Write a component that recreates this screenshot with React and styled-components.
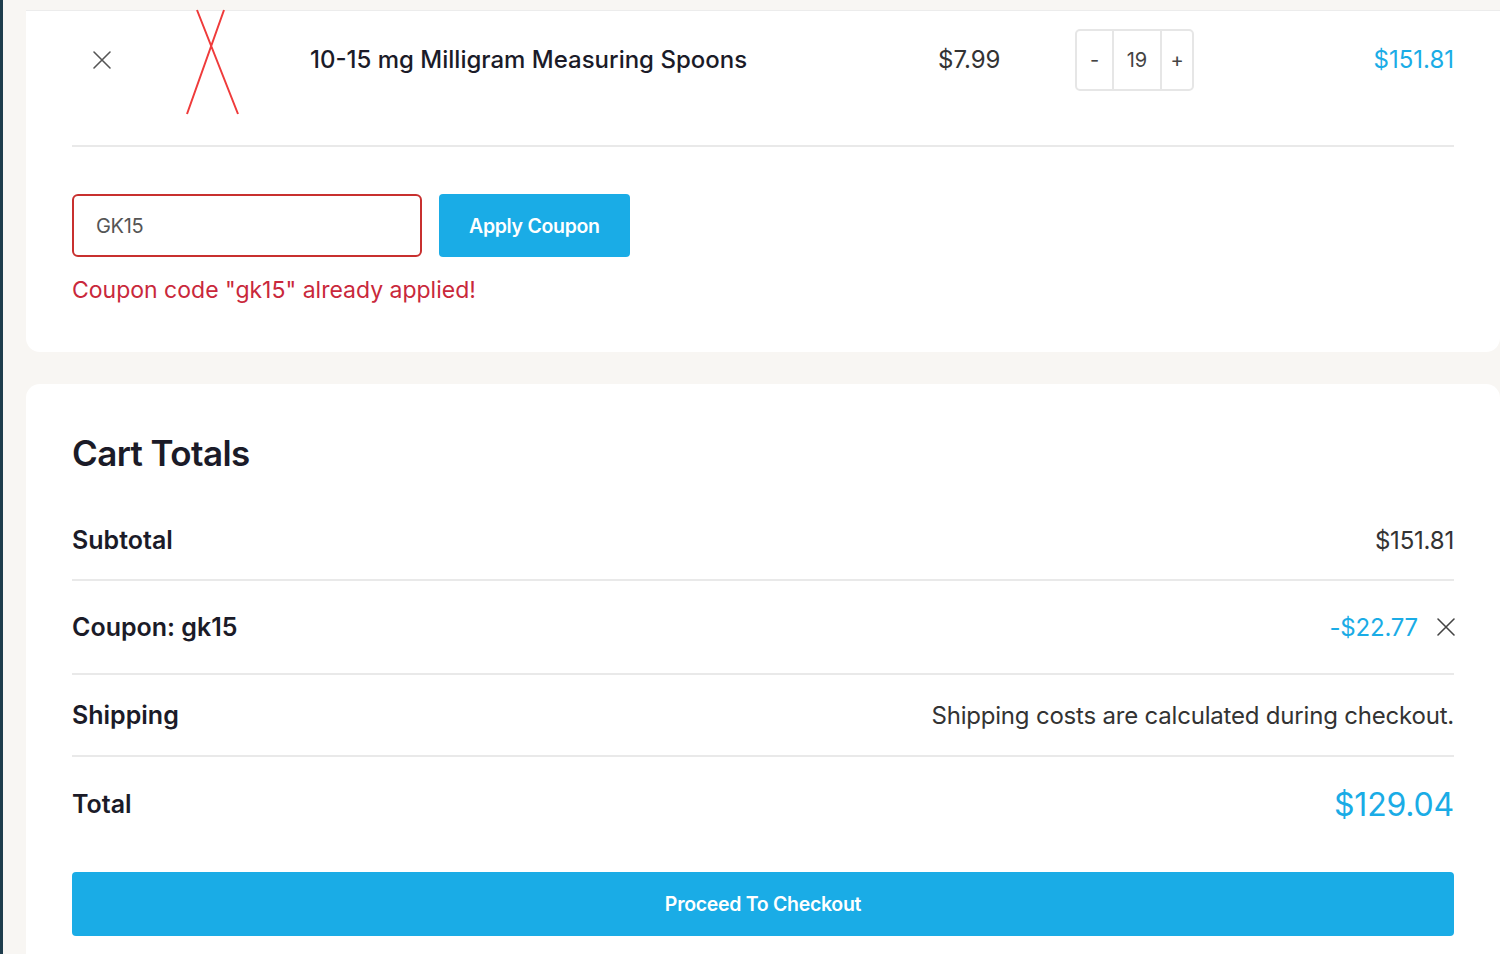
import styled, { createGlobalStyle } from 'styled-components';

const GlobalStyle = createGlobalStyle`
  * { box-sizing: border-box; }
  html, body {
    margin: 0;
    padding: 0;
    background: #f8f6f3;
    font-family: Inter, "Noto Sans", "Liberation Sans", sans-serif;
    color: #1b1b28;
    overflow: hidden;
  }
`;

const BLUE = '#1aace6';

const Page = styled.div`
  display: flex;
  width: 1500px;
  height: 954px;
  overflow: hidden;
`;

const Edge = styled.div`
  width: 3px;
  flex-shrink: 0;
  background: #1f3d4c;
`;

const Main = styled.div`
  flex: 1;
  display: flex;
  flex-direction: column;
  padding-left: 23px;
  padding-top: 10px;
  gap: 32px;
`;

const Card = styled.section`
  background: #fff;
  padding: ${(p) => p.$pad || '0 46px'};
  border-radius: ${(p) => p.$radius || '14px'};
  border-top: ${(p) => (p.$topLine ? '1px solid #ececec' : 'none')};
  flex-shrink: 0;
`;

const ProductRow = styled.div`
  display: grid;
  grid-template-columns: 60px 178px 628px 137px 119px 1fr;
  align-items: center;
  height: 136px;
  padding-bottom: 37px;
  border-bottom: 2px solid #e9e9e9;
`;

const IconButton = styled.button`
  border: none;
  background: none;
  padding: 0;
  display: flex;
  align-items: center;
  justify-content: ${(p) => p.$justify || 'flex-start'};
  margin-right: ${(p) => p.$pullRight || 0}px;
  color: ${(p) => p.$color || '#555'};
  cursor: pointer;
`;

const Thumb = styled.div`
  width: 60px;
  height: 97px;
  margin-left: 52px;
`;

const ProductName = styled.div`
  font-size: 24px;
  font-weight: 500;
`;

const Price = styled.div`
  font-size: 24px;
  color: #333;
`;

const Qty = styled.div`
  display: flex;
  height: 62px;
  width: 119px;
  border: 2px solid #e6e6e6;
  border-radius: 5px;
`;

const QtyCell = styled.div`
  width: ${(p) => p.$w}px;
  display: flex;
  align-items: center;
  justify-content: center;
  font-size: 20px;
  color: #444;
  border-left: ${(p) => (p.$divider ? '2px solid #e6e6e6' : 'none')};
`;

const LineTotal = styled.div`
  justify-self: end;
  font-size: 24px;
  color: ${BLUE};
`;

const CouponForm = styled.div`
  display: flex;
  gap: 17px;
  margin-top: 47px;
`;

const CouponInput = styled.input`
  width: 350px;
  height: 63px;
  border: 2px solid #c8302f;
  border-radius: 6px;
  padding: 0 22px;
  font-family: inherit;
  font-size: 20px;
  color: #555;
  letter-spacing: -0.3px;
  outline: none;
`;

const Button = styled.button`
  height: ${(p) => p.$h || 63}px;
  width: ${(p) => p.$w || 'auto'};
  margin-top: ${(p) => p.$mt || 0}px;
  padding: 0 30px;
  border: none;
  border-radius: 4px;
  background: ${BLUE};
  color: #fff;
  font-family: inherit;
  font-size: 19.5px;
  font-weight: 600;
  letter-spacing: -0.3px;
  cursor: pointer;
`;

const ErrorText = styled.p`
  margin: 18px 0 0;
  padding-bottom: 47px;
  font-size: 23px;
  line-height: 30px;
  color: #c9283b;
`;

const Heading = styled.h2`
  margin: 0 0 27px;
  font-size: 35px;
  line-height: 41px;
  font-weight: 600;
  letter-spacing: -0.6px;
`;

const TotalsRow = styled.div`
  display: flex;
  align-items: center;
  justify-content: space-between;
  min-height: ${(p) => p.$h}px;
  border-bottom: ${(p) => (p.$last ? 'none' : '2px solid #e9e9e9')};
`;

const Label = styled.div`
  font-size: 25px;
  font-weight: 600;
`;

const Value = styled.div`
  display: flex;
  align-items: center;
  gap: 18px;
  font-size: ${(p) => p.$size || 24}px;
  color: ${(p) => (p.$blue ? BLUE : '#333')};
  letter-spacing: -0.2px;
`;

const Cross = ({ size = 20, stroke = 1.6 }) => (
  <svg width={size} height={size} viewBox="0 0 20 20" fill="none">
    <path d="M2 2 L18 18 M18 2 L2 18" stroke="currentColor" strokeWidth={stroke} strokeLinecap="round" />
  </svg>
);

const BrokenImage = () => (
  <svg width="60" height="97" viewBox="0 0 60 97" fill="none" style={{ overflow: 'visible' }}>
    <path d="M13 -1 L54 103 M40 -1 L3 103" stroke="#ef3b3b" strokeWidth="2" />
  </svg>
);

const App = () => {
  return (
    <>
      <GlobalStyle />
      <Page>
        <Edge />
        <Main>
          <Card $radius="0 0 14px 14px" $topLine>
            <ProductRow>
              <IconButton $justify="center" aria-label="Remove item">
                <Cross />
              </IconButton>
              <Thumb>
                <BrokenImage />
              </Thumb>
              <ProductName>10-15 mg Milligram Measuring Spoons</ProductName>
              <Price>$7.99</Price>
              <Qty>
                <QtyCell $w={35}>-</QtyCell>
                <QtyCell $w={48} $divider>19</QtyCell>
                <QtyCell $w={32} $divider>+</QtyCell>
              </Qty>
              <LineTotal>$151.81</LineTotal>
            </ProductRow>
            <CouponForm>
              <CouponInput defaultValue="GK15" />
              <Button>Apply Coupon</Button>
            </CouponForm>
            <ErrorText>Coupon code "gk15" already applied!</ErrorText>
          </Card>

          <Card $pad="49px 46px 40px" $radius="14px 14px 0 0">
            <Heading>Cart Totals</Heading>
            <TotalsRow $h={80}>
              <Label>Subtotal</Label>
              <Value>$151.81</Value>
            </TotalsRow>
            <TotalsRow $h={94}>
              <Label>Coupon: gk15</Label>
              <Value $blue>
                -$22.77
                <IconButton aria-label="Remove coupon" $color="#444" $pullRight={-2}>
                  <Cross />
                </IconButton>
              </Value>
            </TotalsRow>
            <TotalsRow $h={82}>
              <Label>Shipping</Label>
              <Value>Shipping costs are calculated during checkout.</Value>
            </TotalsRow>
            <TotalsRow $h={94} $last>
              <Label>Total</Label>
              <Value $blue $size={32}>$129.04</Value>
            </TotalsRow>
            <Button $h={64} $w="100%" $mt={21}>
              Proceed To Checkout
            </Button>
          </Card>
        </Main>
      </Page>
    </>
  );
};

export default App;
